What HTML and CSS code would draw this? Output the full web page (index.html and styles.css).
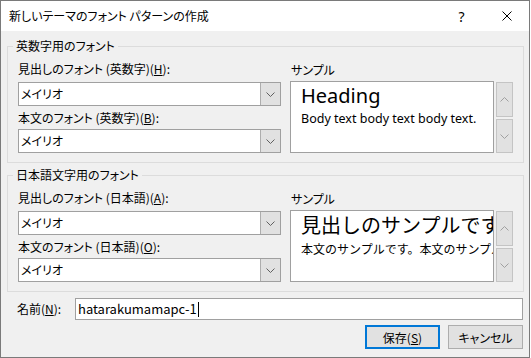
FILE: index.html
```html
<!DOCTYPE html>
<html lang="ja">

<head>
    <meta charset="UTF-8">
    <meta name="viewport" content="width=device-width, initial-scale=1.0">
    <title>新しいテーマのフォント パターンの作成</title>
    <link rel="stylesheet" href="styles.css">
</head>

<body>
    <div class="window">
        <div class="titlebar">
            <span class="title">新しいテーマのフォント パターンの作成</span>
            <div class="caption">
                <span class="caption-btn help">?</span>
                <span class="caption-btn">
                    <svg width="10" height="10" viewBox="0 0 10 10">
                        <path d="M0.5 0.5 L9.5 9.5 M9.5 0.5 L0.5 9.5" stroke="#000" stroke-width="1" fill="none" />
                    </svg>
                </span>
            </div>
        </div>

        <div class="content">
            <fieldset class="group">
                <legend>英数字用のフォント</legend>
                <div class="group-grid">
                    <div class="fields">
                        <div class="label first">見出しのフォント (英数字)(<u>H</u>):</div>
                        <div class="combo">
                            <span class="combo-text">メイリオ</span>
                            <span class="combo-drop">
                                <svg width="9" height="5" viewBox="0 0 9 5"><path d="M0.5 0.5 L4.5 4.5 L8.5 0.5" stroke="#606060" fill="none" /></svg>
                            </span>
                        </div>
                        <div class="label">本文のフォント (英数字)(<u>B</u>):</div>
                        <div class="combo second">
                            <span class="combo-text">メイリオ</span>
                            <span class="combo-drop">
                                <svg width="9" height="5" viewBox="0 0 9 5"><path d="M0.5 0.5 L4.5 4.5 L8.5 0.5" stroke="#606060" fill="none" /></svg>
                            </span>
                        </div>
                    </div>
                    <div class="sample-col">
                        <div class="sample-label">サンプル</div>
                        <div class="sample-row">
                            <div class="sample-box latin">
                                <div class="sample-head">Heading</div>
                                <div class="sample-body">Body text body text body text.</div>
                            </div>
                            <div class="spin">
                                <span class="spin-btn up">
                                    <svg width="9" height="5" viewBox="0 0 9 5"><path d="M0.5 4.5 L4.5 0.5 L8.5 4.5" stroke="#a0a0a0" fill="none" /></svg>
                                </span>
                                <span class="spin-btn down">
                                    <svg width="9" height="5" viewBox="0 0 9 5"><path d="M0.5 0.5 L4.5 4.5 L8.5 0.5" stroke="#a0a0a0" fill="none" /></svg>
                                </span>
                            </div>
                        </div>
                    </div>
                </div>
            </fieldset>

            <fieldset class="group second-group">
                <legend>日本語文字用のフォント</legend>
                <div class="group-grid">
                    <div class="fields">
                        <div class="label first">見出しのフォント (日本語)(<u>A</u>):</div>
                        <div class="combo">
                            <span class="combo-text">メイリオ</span>
                            <span class="combo-drop">
                                <svg width="9" height="5" viewBox="0 0 9 5"><path d="M0.5 0.5 L4.5 4.5 L8.5 0.5" stroke="#606060" fill="none" /></svg>
                            </span>
                        </div>
                        <div class="label">本文のフォント (日本語)(<u>O</u>):</div>
                        <div class="combo second">
                            <span class="combo-text">メイリオ</span>
                            <span class="combo-drop">
                                <svg width="9" height="5" viewBox="0 0 9 5"><path d="M0.5 0.5 L4.5 4.5 L8.5 0.5" stroke="#606060" fill="none" /></svg>
                            </span>
                        </div>
                    </div>
                    <div class="sample-col">
                        <div class="sample-label">サンプル</div>
                        <div class="sample-row">
                            <div class="sample-box cjk">
                                <div class="sample-head">見出しのサンプルです</div>
                                <div class="sample-body">本文のサンプルです。本文のサンプルです。</div>
                            </div>
                            <div class="spin">
                                <span class="spin-btn up">
                                    <svg width="9" height="5" viewBox="0 0 9 5"><path d="M0.5 4.5 L4.5 0.5 L8.5 4.5" stroke="#a0a0a0" fill="none" /></svg>
                                </span>
                                <span class="spin-btn down">
                                    <svg width="9" height="5" viewBox="0 0 9 5"><path d="M0.5 0.5 L4.5 4.5 L8.5 0.5" stroke="#a0a0a0" fill="none" /></svg>
                                </span>
                            </div>
                        </div>
                    </div>
                </div>
            </fieldset>

            <div class="name-row">
                <span class="name-label">名前(<u>N</u>):</span>
                <div class="name-input">hatarakumamapc-1<span class="caret"></span></div>
            </div>

            <div class="actions">
                <span class="btn default">保存(<u>S</u>)</span>
                <span class="btn">キャンセル</span>
            </div>
        </div>
    </div>
</body>

</html>
```

FILE: styles.css
```css
body {
    margin: 0;
    background-color: #ffffff;
    font-family: 'Noto Sans CJK JP', 'Noto Sans', sans-serif;
    font-size: 12px;
    color: #000;
}

.window {
    width: 530px;
    height: 358px;
    box-sizing: border-box;
    border: 1px solid #7a7a7a;
    background-color: #f0f0f0;
    font-feature-settings: "palt";
}

.titlebar {
    height: 30px;
    background-color: #ffffff;
    display: flex;
    align-items: center;
    justify-content: space-between;
}

.title {
    padding-left: 8px;
    line-height: 16px;
}

.caption {
    display: flex;
    height: 100%;
}

.caption-btn {
    width: 45px;
    display: flex;
    align-items: center;
    justify-content: center;
}

.caption-btn.help {
    font-size: 14px;
    font-family: 'Noto Sans', sans-serif;
}

.content {
    padding: 7px 5px 0 6px;
}

.group {
    margin: 0;
    border: 1px solid #dcdcdc;
    padding: 0 10px 9px 10px;
    min-width: 0;
}

.second-group {
    margin-top: 4px;
}

.group legend {
    padding: 0 3px;
    margin-left: -5px;
    line-height: 16px;
}

.group-grid {
    display: grid;
    grid-template-columns: 263px 223px;
    column-gap: 9px;
}

.label {
    line-height: 16px;
    margin-top: 4px;
    white-space: nowrap;
}

.label.first {
    margin-top: 7px;
}

.combo {
    margin-top: 5px;
    height: 24px;
    box-sizing: border-box;
    border: 1px solid #a0a0a0;
    background-color: #ffffff;
    display: flex;
}

.combo.second {
    margin-top: 3px;
}

.combo-text {
    flex: 1;
    padding-left: 2px;
    line-height: 22px;
}

.combo-drop {
    width: 19px;
    background-color: #e1e1e1;
    border-left: 1px solid #adadad;
    display: flex;
    align-items: center;
    justify-content: center;
}

.sample-label {
    line-height: 16px;
    margin-top: 8px;
    padding-left: 1px;
}

.sample-row {
    display: flex;
    gap: 2px;
    margin-top: 3px;
}

.sample-box {
    width: 204px;
    height: 72px;
    box-sizing: border-box;
    border: 1px solid #a0a0a0;
    background-color: #ffffff;
    padding: 1px 8px 0 10px;
    overflow: hidden;
    white-space: nowrap;
    font-feature-settings: normal;
}

.sample-box.latin {
    font-family: 'Noto Sans', sans-serif;
}

.sample-head {
    font-size: 20px;
    line-height: 26px;
}

.sample-body {
    font-size: 12px;
    line-height: 16px;
    margin-top: 2px;
}

.sample-box.latin .sample-body {
    font-size: 12.5px;
}

.sample-box.cjk .sample-body {
    margin-top: 3px;
}

.spin {
    display: flex;
    flex-direction: column;
    gap: 2px;
    margin-top: 1px;
}

.spin-btn {
    width: 17px;
    height: 35px;
    box-sizing: border-box;
    border: 1px solid #c4c4c4;
    background-color: #e1e1e1;
    display: flex;
    align-items: center;
    justify-content: center;
}

.spin-btn.down {
    height: 34px;
}

.name-row {
    display: grid;
    grid-template-columns: 68px 1fr;
    align-items: center;
    margin-top: 6px;
    margin-right: 1px;
}

.name-label {
    padding-left: 10px;
    line-height: 16px;
}

.name-input {
    height: 22px;
    box-sizing: border-box;
    border: 1px solid #a0a0a0;
    background-color: #ffffff;
    padding-left: 2px;
    line-height: 20px;
    font-size: 13px;
    font-feature-settings: normal;
    display: flex;
    align-items: center;
}

.caret {
    display: inline-block;
    width: 1px;
    height: 15px;
    background-color: #000;
    margin-left: 1px;
}

.actions {
    display: flex;
    justify-content: flex-end;
    gap: 8px;
    margin-top: 5px;
    margin-right: 1px;
}

.btn {
    width: 75px;
    height: 24px;
    box-sizing: border-box;
    border: 1px solid #adadad;
    background-color: #e1e1e1;
    display: flex;
    align-items: center;
    justify-content: center;
}

.btn.default {
    border: 2px solid #0078d7;
}
```
